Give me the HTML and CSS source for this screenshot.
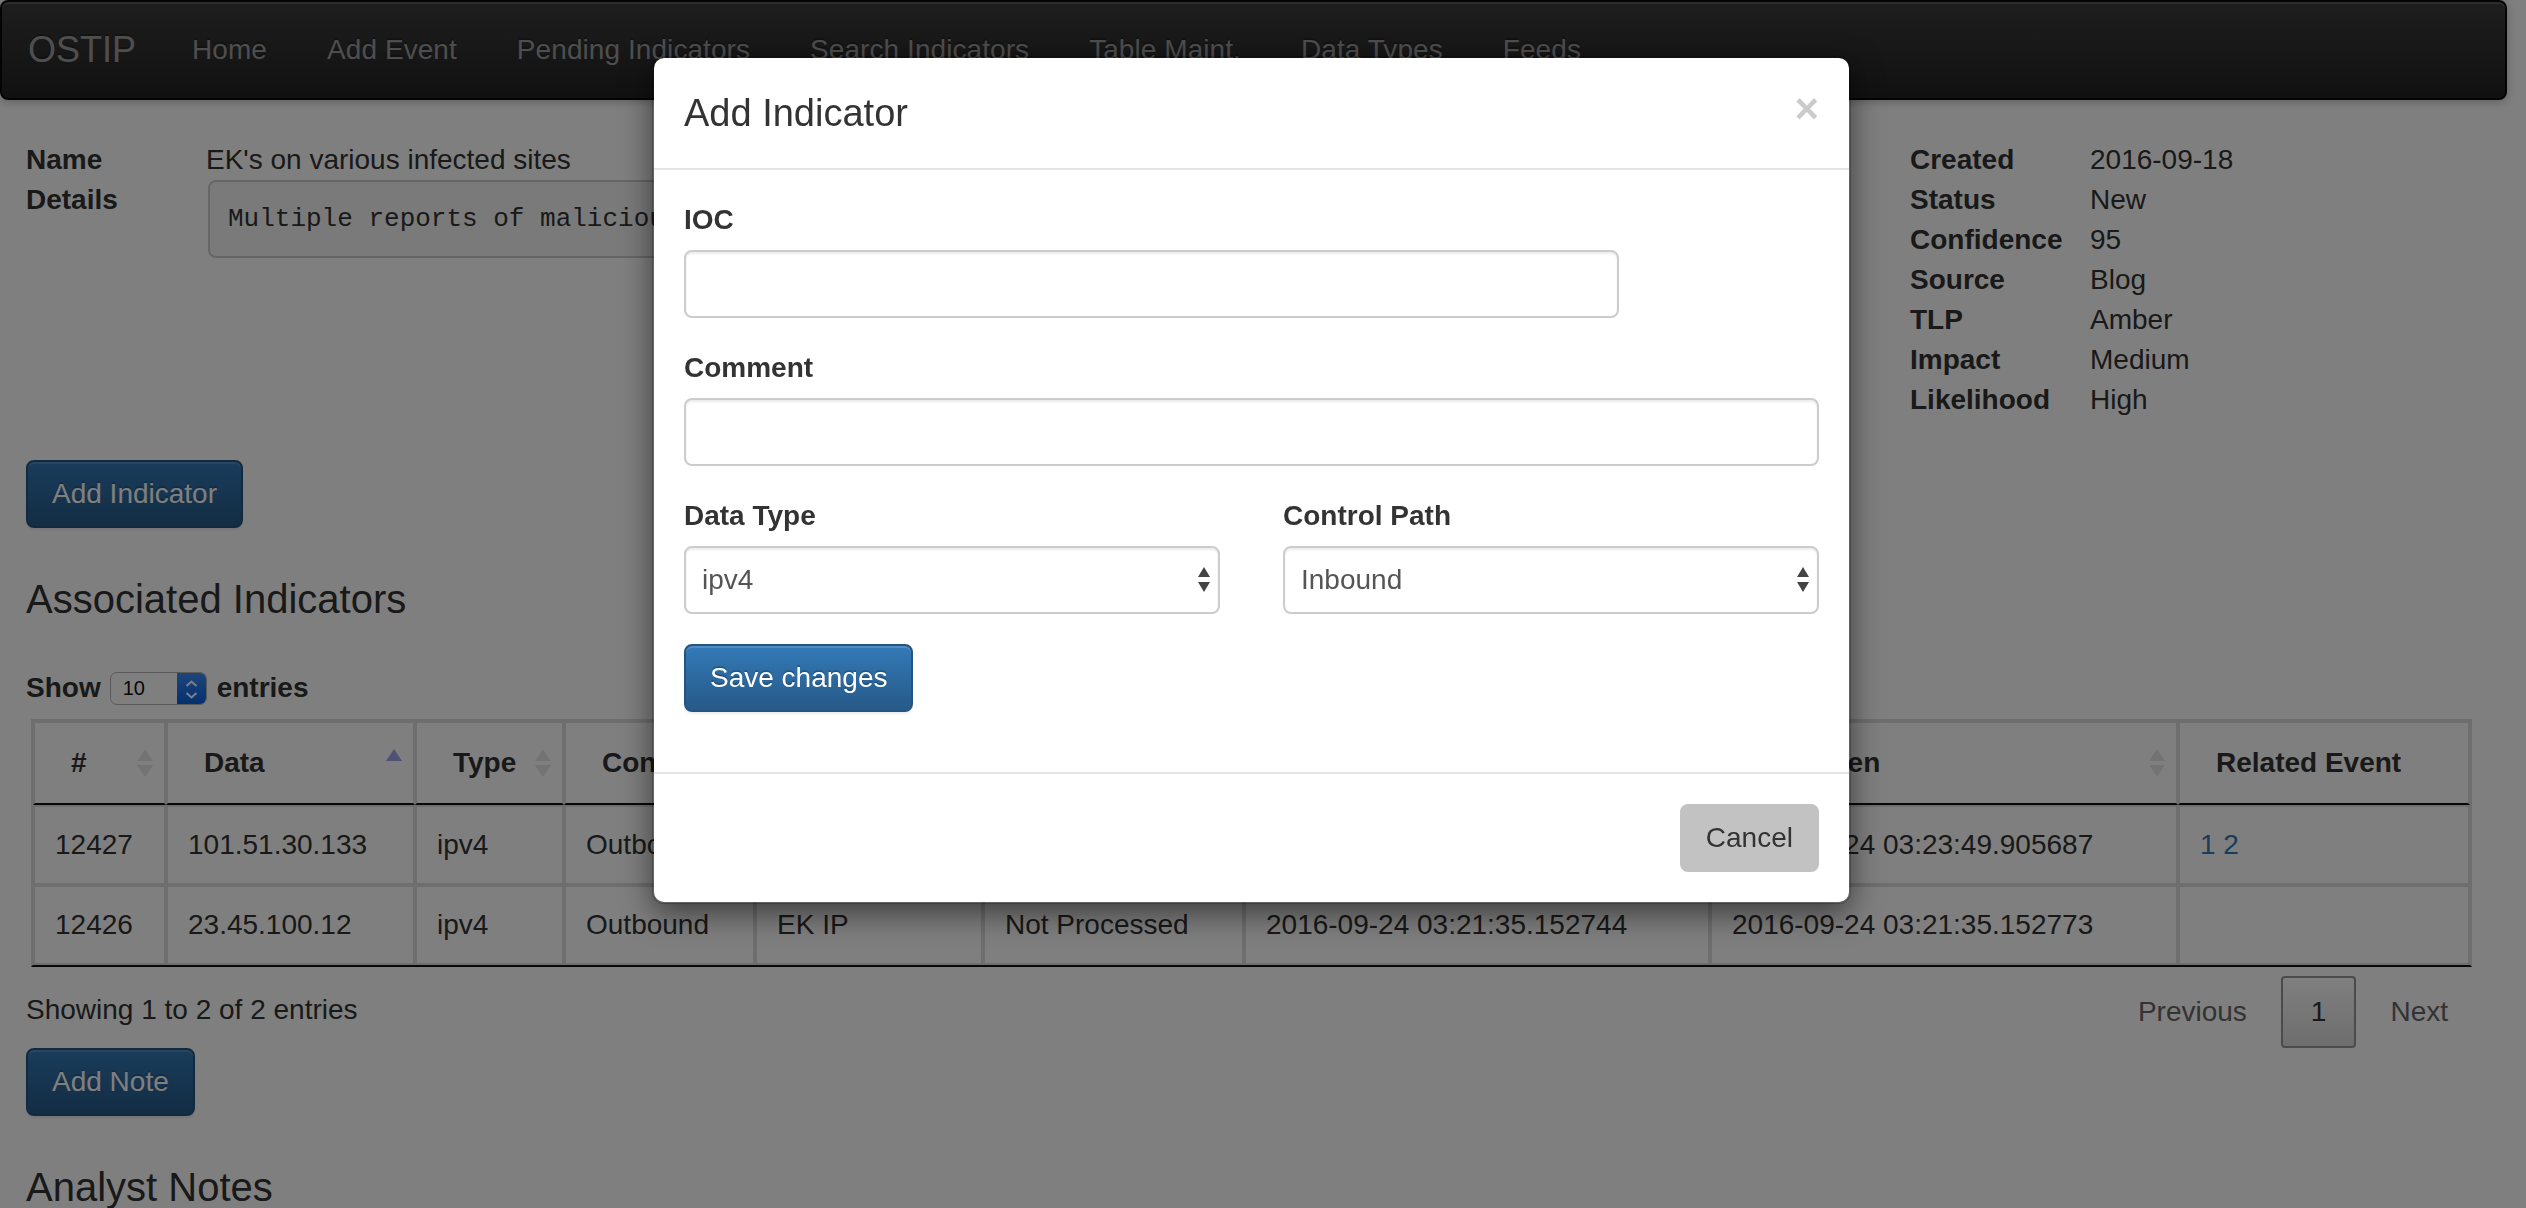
FILE: index.html
```html
<!DOCTYPE html>
<html lang="en">
<head>
<meta charset="utf-8">
<title>OSTIP - Event</title>
<link rel="stylesheet" href="styles.css">
</head>
<body>
<nav class="navbar">
  <a class="brand" href="#">OSTIP</a>
  <ul class="nav">
    <li><a href="#">Home</a></li>
    <li><a href="#">Add Event</a></li>
    <li><a href="#">Pending Indicators</a></li>
    <li><a href="#">Search Indicators</a></li>
    <li><a href="#">Table Maint.</a></li>
    <li><a href="#">Data Types</a></li>
    <li><a href="#">Feeds</a></li>
  </ul>
</nav>

<main class="container">
  <section class="event-info">
    <dl class="meta">
      <dt>Name</dt><dd>EK's on various infected sites</dd>
      <dt>Details</dt><dd><pre class="details">Multiple reports of malicious EK activity on compromised sites</pre></dd>
    </dl>
    <dl class="meta">
      <dt>Created</dt><dd>2016-09-18</dd>
      <dt>Status</dt><dd>New</dd>
      <dt>Confidence</dt><dd>95</dd>
      <dt>Source</dt><dd>Blog</dd>
      <dt>TLP</dt><dd>Amber</dd>
      <dt>Impact</dt><dd>Medium</dd>
      <dt>Likelihood</dt><dd>High</dd>
    </dl>
  </section>

  <button class="btn btn-primary">Add Indicator</button>

  <h3 class="section-title">Associated Indicators</h3>

  <div class="dt-wrapper">
    <div class="dt-length">
      <span>Show</span>
      <span class="mini-select">
        <span class="mini-value">10</span>
        <span class="mini-arrows">
          <svg width="29" height="33" viewBox="0 0 29 33"><path d="M9.5 13 L14.5 8.5 L19.5 13" fill="none" stroke="#fff" stroke-width="2"/><path d="M9.5 20 L14.5 24.5 L19.5 20" fill="none" stroke="#fff" stroke-width="2"/></svg>
        </span>
      </span>
      <span>entries</span>
    </div>

    <table class="dt">
      <thead>
        <tr>
          <th>#<svg class="sort" width="16" height="28" viewBox="0 0 16 28"><polygon points="8,0 16,12 0,12" class="tri-off"/><polygon points="0,16 16,16 8,28" class="tri-off"/></svg></th>
          <th>Data<svg class="sort" width="16" height="28" viewBox="0 0 16 28"><polygon points="8,0 16,12 0,12" class="tri-on"/></svg></th>
          <th>Type<svg class="sort" width="16" height="28" viewBox="0 0 16 28"><polygon points="8,0 16,12 0,12" class="tri-off"/><polygon points="0,16 16,16 8,28" class="tri-off"/></svg></th>
          <th>Control<svg class="sort" width="16" height="28" viewBox="0 0 16 28"><polygon points="8,0 16,12 0,12" class="tri-off"/><polygon points="0,16 16,16 8,28" class="tri-off"/></svg></th>
          <th>Comment<svg class="sort" width="16" height="28" viewBox="0 0 16 28"><polygon points="8,0 16,12 0,12" class="tri-off"/><polygon points="0,16 16,16 8,28" class="tri-off"/></svg></th>
          <th>Status<svg class="sort" width="16" height="28" viewBox="0 0 16 28"><polygon points="8,0 16,12 0,12" class="tri-off"/><polygon points="0,16 16,16 8,28" class="tri-off"/></svg></th>
          <th>First Seen<svg class="sort" width="16" height="28" viewBox="0 0 16 28"><polygon points="8,0 16,12 0,12" class="tri-off"/><polygon points="0,16 16,16 8,28" class="tri-off"/></svg></th>
          <th>Last Seen<svg class="sort" width="16" height="28" viewBox="0 0 16 28"><polygon points="8,0 16,12 0,12" class="tri-off"/><polygon points="0,16 16,16 8,28" class="tri-off"/></svg></th>
          <th>Related Event</th>
        </tr>
      </thead>
      <tbody>
        <tr>
          <td>12427</td>
          <td>101.51.30.133</td>
          <td>ipv4</td>
          <td>Outbound</td>
          <td>EK IP</td>
          <td>Not Processed</td>
          <td>2016-09-24 03:23:49.905650</td>
          <td>2016-09-24 03:23:49.905687</td>
          <td><a href="#">1</a> <a href="#">2</a></td>
        </tr>
        <tr>
          <td>12426</td>
          <td>23.45.100.12</td>
          <td>ipv4</td>
          <td>Outbound</td>
          <td>EK IP</td>
          <td>Not Processed</td>
          <td>2016-09-24 03:21:35.152744</td>
          <td>2016-09-24 03:21:35.152773</td>
          <td></td>
        </tr>
      </tbody>
    </table>

    <div class="dt-bottom">
      <div class="dt-info">Showing 1 to 2 of 2 entries</div>
      <div class="dt-paginate">
        <a class="page-btn disabled" href="#">Previous</a>
        <a class="page-btn current" href="#">1</a>
        <a class="page-btn disabled" href="#">Next</a>
      </div>
    </div>
  </div>

  <button class="btn btn-primary">Add Note</button>

  <h3 class="section-title">Analyst Notes</h3>
</main>

<div class="modal-backdrop"></div>

<div class="modal">
  <div class="modal-dialog">
    <div class="modal-header">
      <h4 class="modal-title">Add Indicator</h4>
      <button class="close" aria-label="Close">×</button>
    </div>
    <div class="modal-body">
      <div class="form-group">
        <label>IOC</label>
        <div class="form-control ioc"></div>
      </div>
      <div class="form-group">
        <label>Comment</label>
        <div class="form-control"></div>
      </div>
      <div class="form-row">
        <div class="form-group">
          <label>Data Type</label>
          <div class="form-control select">
            <span>ipv4</span>
            <svg width="14" height="26" viewBox="0 0 14 26"><polygon points="7,0 13,10 1,10" fill="#444"/><polygon points="1,15 13,15 7,25" fill="#444"/></svg>
          </div>
        </div>
        <div class="form-group">
          <label>Control Path</label>
          <div class="form-control select">
            <span>Inbound</span>
            <svg width="14" height="26" viewBox="0 0 14 26"><polygon points="7,0 13,10 1,10" fill="#444"/><polygon points="1,15 13,15 7,25" fill="#444"/></svg>
          </div>
        </div>
      </div>
      <div class="form-group">
        <button class="btn btn-primary">Save changes</button>
      </div>
    </div>
    <div class="modal-footer">
      <button class="btn btn-cancel">Cancel</button>
    </div>
  </div>
</div>
</body>
</html>
```

FILE: styles.css
```css
* { box-sizing: border-box; }

html { overflow: hidden; }

body {
  margin: 0;
  padding-right: 19px;
  font-family: "Liberation Sans", Arial, Helvetica, sans-serif;
  font-size: 28px;
  line-height: 40px;
  color: #333;
  background: #fff;
}

a { color: #337ab7; text-decoration: none; }

/* ---------- navbar ---------- */
.navbar {
  height: 100px;
  margin-bottom: 40px;
  display: flex;
  align-items: center;
  background: linear-gradient(#3c3c3c, #222);
  border: 2px solid #080808;
  border-radius: 8px;
  box-shadow: inset 0 2px 0 rgba(255,255,255,.15), 0 2px 10px rgba(0,0,0,.25);
}
.brand {
  padding: 0 26px;
  font-size: 36px;
  color: #9d9d9d;
  text-shadow: 0 -2px 0 rgba(0,0,0,.25);
}
.nav {
  display: flex;
  margin: 0;
  padding: 0;
  list-style: none;
  letter-spacing: .07px;
}
.nav a {
  display: block;
  padding: 0 30px;
  color: #9d9d9d;
  line-height: 96px;
  text-shadow: 0 -2px 0 rgba(0,0,0,.25);
}

/* ---------- page ---------- */
.container {
  padding: 0 29px 0 26px;
}

.event-info {
  display: grid;
  grid-template-columns: 1884px 1fr;
}
.meta {
  display: grid;
  grid-template-columns: 180px 1fr;
  align-content: start;
  margin: 0 0 40px;
}
.meta dt { font-weight: bold; }
.meta dd { margin: 0; }

.details {
  margin: 0 0 0 2px;
  width: 1300px;
  padding: 18px;
  font-family: "Liberation Mono", "Courier New", monospace;
  font-size: 26px;
  line-height: 38px;
  color: #333;
  background: #f5f5f5;
  border: 2px solid #ccc;
  border-radius: 8px;
  white-space: pre;
  overflow: hidden;
}

.btn {
  display: block;
  width: fit-content;
  margin: 0;
  padding: 12px 24px;
  font-family: inherit;
  font-size: 28px;
  line-height: 40px;
  border: 2px solid transparent;
  border-radius: 8px;
  cursor: pointer;
}
.btn-primary {
  color: #fff;
  background: linear-gradient(#337ab7, #265a88);
  border-color: #245580;
  text-shadow: 0 -2px 0 rgba(0,0,0,.2);
  box-shadow: inset 0 2px 0 rgba(255,255,255,.15), 0 2px 2px rgba(0,0,0,.075);
}
.btn-cancel {
  color: #333;
  background: #c2c2c2;
  border-color: #c2c2c2;
}

.section-title {
  margin: 47px 0 45px;
  font-size: 40px;
  line-height: 48px;
  font-weight: normal;
  color: #333;
}

/* ---------- datatable ---------- */
.dt-length {
  display: flex;
  align-items: center;
  height: 40px;
  font-weight: bold;
}
.mini-select {
  display: flex;
  height: 33px;
  width: 97px;
  margin: 0 10px 0 9px;
  border: 1px solid #b5b5b5;
  border-radius: 7px;
  background: #fff;
  overflow: hidden;
  font-weight: normal;
}
.mini-value {
  flex: 1;
  padding-left: 12px;
  font-size: 20px;
  line-height: 31px;
  color: #111;
}
.mini-arrows {
  width: 29px;
  display: flex;
  background: linear-gradient(#3b8cf5, #0a5fe0);
}

.dt {
  width: 2441px;
  margin: 11px 0 0 5px;
  table-layout: fixed;
  border-collapse: separate;
  border-spacing: 0;
  border: 2px solid #ddd;
  border-bottom-color: #111;
}
.dt th,
.dt td {
  border: 2px solid #ddd;
  text-align: left;
  white-space: nowrap;
  overflow: hidden;
}
.dt th {
  position: relative;
  padding: 20px 36px;
  font-weight: bold;
  border-bottom-color: #111;
}
.dt td {
  padding: 18px 20px;
}
.dt th:nth-child(1) { width: 133px; }
.dt th:nth-child(2) { width: 249px; }
.dt th:nth-child(3) { width: 149px; }
.dt th:nth-child(4) { width: 191px; }
.dt th:nth-child(5) { width: 228px; }
.dt th:nth-child(6) { width: 261px; }
.dt th:nth-child(7) { width: 466px; }
.dt th:nth-child(8) { width: 468px; }
.dt th:nth-child(9) { width: 292px; }

.sort {
  position: absolute;
  right: 11px;
  top: 50%;
  transform: translateY(-50%);
}
.tri-off { fill: #e6e6e6; }
.tri-on { fill: #a3a3ef; }

.dt-bottom {
  display: flex;
  justify-content: space-between;
  height: 81px;
}
.dt-info { padding-top: 23px; }
.dt-paginate {
  display: flex;
  padding-top: 9px;
  align-items: flex-start;
}
.page-btn {
  margin-left: 4px;
  padding: 14px 28px;
  border: 2px solid transparent;
  border-radius: 4px;
  color: #333;
}
.page-btn.disabled { color: #666; }
.page-btn.current {
  border-color: #979797;
  background: linear-gradient(#fff, #dcdcdc);
}

/* ---------- modal ---------- */
.modal-backdrop {
  position: fixed;
  inset: 0;
  background: rgba(0,0,0,.5);
}
.modal {
  position: fixed;
  top: 0;
  left: 0;
  right: 23px;
  bottom: 0;
}
.modal-dialog {
  width: 1199px;
  margin: 56px auto 0;
  background: #fff;
  background-clip: padding-box;
  border: 2px solid rgba(0,0,0,.2);
  border-radius: 12px;
  box-shadow: 0 10px 30px rgba(0,0,0,.5);
}
.modal-header {
  display: flex;
  justify-content: space-between;
  align-items: flex-start;
  padding: 30px;
  border-bottom: 2px solid #e5e5e5;
}
.modal-title {
  margin: 0;
  font-size: 38px;
  line-height: 50px;
  font-weight: normal;
  color: #333;
}
.close {
  margin: 0;
  padding: 0;
  border: 0;
  background: none;
  font-family: inherit;
  font-size: 42px;
  line-height: 42px;
  font-weight: bold;
  color: #000;
  opacity: .2;
  text-shadow: 0 2px 0 #fff;
}
.modal-body {
  padding: 30px;
}
.form-group { margin-bottom: 30px; }
.form-group label {
  display: block;
  margin-bottom: 10px;
  font-weight: bold;
}
.form-control {
  height: 68px;
  width: 100%;
  background: #fff;
  border: 2px solid #ccc;
  border-radius: 8px;
  box-shadow: inset 0 2px 2px rgba(0,0,0,.075);
  color: #555;
}
.form-control.ioc { width: 935px; }
.form-row {
  display: grid;
  grid-template-columns: 1fr 1fr;
  column-gap: 63px;
}
.select {
  display: flex;
  align-items: center;
  justify-content: space-between;
  padding: 0 7px 0 16px;
}
.modal-footer {
  display: flex;
  justify-content: flex-end;
  padding: 30px;
  border-top: 2px solid #e5e5e5;
}
```
